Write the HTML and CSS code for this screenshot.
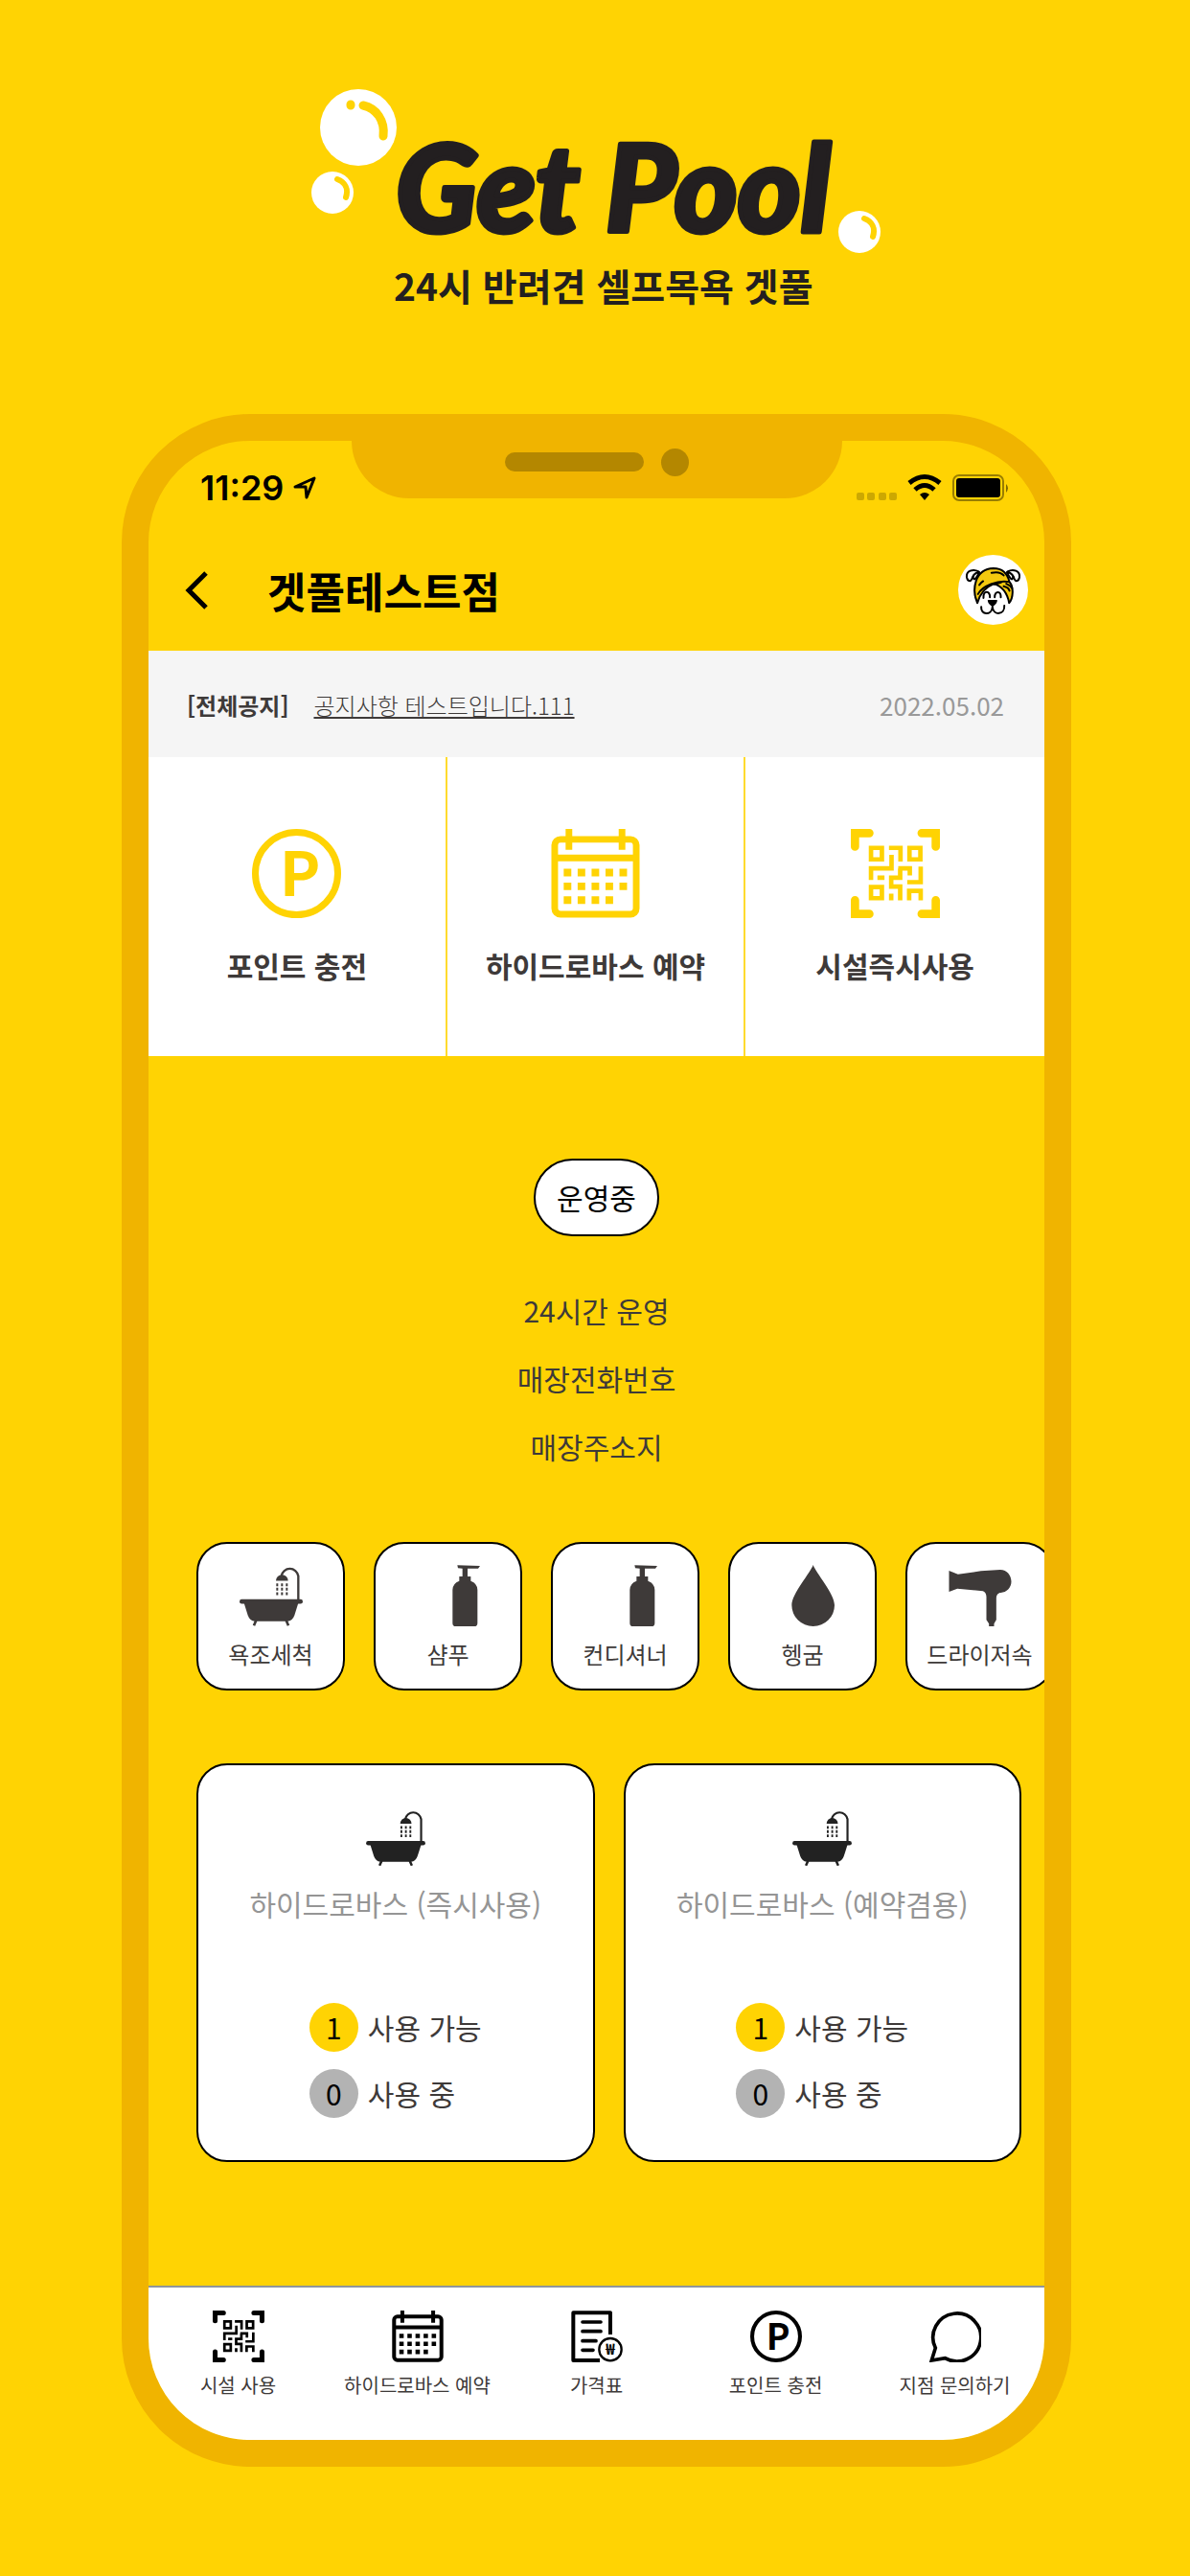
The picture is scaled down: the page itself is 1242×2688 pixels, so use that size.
FILE: index.html
```html
<!DOCTYPE html>
<html lang="ko">
<head>
    <meta charset="utf-8">
    <title>겟풀 - 24시 반려견 셀프목욕</title>
    <meta name="viewport" content="width=device-width, initial-scale=1.0">
    <link rel="stylesheet" href="styles.css">
</head>
<body>
    <!-- shared icons -->
    <svg class="icon-defs" aria-hidden="true">
        <symbol id="icon-point" viewBox="0 0 93 93">
            <circle cx="46.5" cy="46.5" r="43" fill="none" stroke="currentColor" stroke-width="7"/>
            <text class="point-letter" x="50" y="70" text-anchor="middle">P</text>
        </symbol>
        <symbol id="icon-calendar" viewBox="0 0 93 94">
            <g fill="none" stroke="currentColor" stroke-width="7">
                <rect x="3.5" y="11" width="86" height="79" rx="6"/>
                <path d="M18.500 0V22M74.500 0V22M3 30.500H90"/>
                <path stroke-width="8" stroke-dasharray="8 6.700" d="M13 46H80M13 60.500H80M13 75H66"/>
            </g>
        </symbol>
        <symbol id="icon-qr" viewBox="0 0 278 278">
            <g fill="none" stroke="currentColor">
                <path stroke-width="26" stroke-linecap="round" d="M13 55V13H58M265 55V13H221M13 222V265H58M265 222V265H221"/>
                <path stroke-width="14" d="M63 59h34v36H63zM183 59h34v36h-34zM63 181h34v35H63zM119 59H155V102M127 81V123H63V159M83 152h22M148 123H184V145M154 123V152H126V180H154V223M218 117V166H176M126 202v21M182 223V193H218V223"/>
            </g>
        </symbol>
        <symbol id="icon-bath" viewBox="0 0 198 189">
            <g fill="currentColor">
                <rect x="0" y="106" width="198" height="14" rx="7"/>
                <path d="M13 115L26 156Q32 174 48 175H150Q166 174 172 156L185 115Z"/>
                <path d="M114 48a19 19 0 0 1 38 0z"/>
            </g>
            <g fill="none" stroke="currentColor">
                <path stroke-width="7" d="M184 107V33A27 28 0 0 0 131 33"/>
                <path stroke-width="8" d="M52 172l-7 16M146 172l7 16"/>
                <path stroke-width="6" stroke-dasharray="9 5" d="M118 56V93M133 56V93M148 56V93"/>
            </g>
        </symbol>
        <symbol id="icon-bottle" viewBox="0 0 86 192" preserveAspectRatio="xMaxYMid">
            <path fill="currentColor" d="M15 1L86 3L80 11L47 11V36H57V50Q78 58 78 78V182Q78 192 68 192H10Q0 192 0 182V78Q0 58 21 50V36H31V11L17 10Z"/>
        </symbol>
        <symbol id="icon-drop" viewBox="0 0 134 192" preserveAspectRatio="xMaxYMid">
            <path fill="currentColor" d="M67 0C75 24 134 90 134 126A67 66 0 0 1 0 126C0 90 59 24 67 0Z"/>
        </symbol>
        <symbol id="icon-dryer" viewBox="0 0 195 192">
            <path fill="currentColor" d="M0 18L28 29L100 19L160 15C182 15 195 33 195 52C195 72 180 86 162 87C154 87 148 94 148 104V172L141 184V192H125V184L117 172V100C117 90 112 84 106 82L26 74L0 84Z"/>
        </symbol>
        <symbol id="icon-price" viewBox="0 0 162 162">
            <g fill="none" stroke="currentColor">
                <path stroke-width="12" stroke-linejoin="round" d="M123 75V7H7V156H90"/>
                <path stroke-width="11" stroke-linecap="round" d="M36 36H93M36 65H93M36 95H78M36 124H69"/>
                <circle cx="123" cy="122" r="35" stroke-width="7"/>
            </g>
            <text class="won-letter" x="123" y="139" text-anchor="middle">₩</text>
        </symbol>
        <symbol id="icon-chat" viewBox="0 0 162 162">
            <path fill="none" stroke="currentColor" stroke-width="11" d="M19 117L7 156L49 149A75 75 0 1 0 19 117Z"/>
        </symbol>
    </svg>

    <h1 class="logo">
        <svg class="logo-art" viewBox="325 90 595 240">
            <g fill="#fff">
                <circle cx="374" cy="133" r="40"/>
                <circle cx="347" cy="201" r="22"/>
                <circle cx="897" cy="242" r="22"/>
            </g>
            <g fill="none" stroke="#ffd303" stroke-linecap="round">
                <path stroke-width="9" d="M379 110C393 113 402 126 400 142M366 109v1"/>
                <path stroke-width="6" d="M352 187C360 190 364 197 361 206M902 228C910 231 914 238 911 247"/>
            </g>
            <text class="logo-name" x="413" y="242">Get Pool</text>
            <text class="logo-sub" x="411" y="314">24시 반려견 셀프목욕 겟풀</text>
        </svg>
    </h1>

    <main class="phone">
        <div class="notch">
            <span class="speaker"></span>
            <span class="camera"></span>
        </div>

        <div class="status-bar">
            <span class="time">11:29</span>
            <svg class="location" viewBox="0 0 24 24">
                <path fill="none" stroke="#000" stroke-width="3" stroke-linejoin="round" d="M2 11L22 2L14 22L13 11Z"/>
            </svg>
            <svg class="signal" viewBox="0 0 160 30">
                <g fill="#000" fill-opacity=".2">
                    <rect x="0" y="20" width="8" height="8" rx="2"/>
                    <rect x="11" y="20" width="8" height="8" rx="2"/>
                    <rect x="23" y="20" width="8" height="8" rx="2"/>
                    <rect x="34" y="20" width="8" height="8" rx="2"/>
                </g>
                <g fill="none" stroke="#000" stroke-width="5">
                    <path d="M55 10Q71 -3 87 10"/>
                    <path d="M61 17Q71 8 81 17"/>
                </g>
                <path d="M66 22Q71 18 76 22L71 28Z"/>
                <rect x="101" y="2" width="52" height="26" rx="6" fill="none" stroke="#000" stroke-opacity=".4" stroke-width="2"/>
                <rect x="104" y="5" width="46" height="20" rx="3"/>
                <path d="M156 11q4 4 0 9z" fill-opacity=".5"/>
            </svg>
        </div>

        <header class="app-header">
            <button class="back" aria-label="뒤로">
                <svg viewBox="0 0 24 40"><path fill="none" stroke="#000" stroke-width="5" d="M22 2L4 20L22 38"/></svg>
            </button>
            <h2>겟풀테스트점</h2>
            <button class="avatar" aria-label="내 정보">
                <svg viewBox="0 0 218 218">
                    <circle cx="109" cy="109" r="109" fill="#fff"/>
                    <g fill="#fff" stroke="#000" stroke-width="6" stroke-linecap="round" stroke-linejoin="round">
                        <path d="M64 52C46 42 24 50 27 70C30 84 40 84 43 74C45 64 52 58 64 52Z"/>
                        <path d="M66 54C52 56 44 66 48 74C52 80 58 70 66 54Z"/>
                        <path d="M154 52C172 42 194 50 191 70C188 84 178 84 175 74C173 64 166 58 154 52Z"/>
                        <path d="M152 54C166 56 174 66 170 74C166 80 160 70 152 54Z"/>
                        <path fill="#f4c90e" d="M60 150C42 110 50 44 110 42C140 42 154 60 160 84C174 100 172 134 159 150C154 122 142 100 112 90C86 100 68 120 60 150Z"/>
                        <path fill="none" d="M62 122C76 96 124 78 158 84M112 92L134 86M150 90Q164 96 168 104M142 98Q158 102 160 112M66 94Q72 86 78 82M104 56Q130 50 142 64"/>
                        <path fill="none" d="M79 134C78 110 100 110 99 132M114 132C114 110 134 112 133 132"/>
                        <path fill="none" d="M72 162C70 188 104 190 107 162C110 190 146 188 144 158"/>
                        <path fill="#000" stroke-width="4" d="M94 142H120Q120 150 107 160Q94 150 94 142Z"/>
                    </g>
                </svg>
            </button>
        </header>

        <section class="notice">
            <strong>[전체공지]</strong>
            <a href="#">공지사항 테스트입니다.111</a>
            <time datetime="2022-05-02">2022.05.02</time>
        </section>

        <section class="menu">
            <a href="#"><svg><use href="#icon-point"/></svg>포인트 충전</a>
            <a href="#"><svg><use href="#icon-calendar"/></svg>하이드로바스 예약</a>
            <a href="#"><svg><use href="#icon-qr"/></svg>시설즉시사용</a>
        </section>

        <section class="store">
            <span class="open-state">운영중</span>
            <p>24시간 운영</p>
            <p>매장전화번호</p>
            <p>매장주소지</p>
        </section>

        <ul class="facilities">
            <li><svg><use href="#icon-bath"/></svg>욕조세척</li>
            <li><svg><use href="#icon-bottle"/></svg>샴푸</li>
            <li><svg><use href="#icon-bottle"/></svg>컨디셔너</li>
            <li><svg><use href="#icon-drop"/></svg>헹굼</li>
            <li><svg><use href="#icon-dryer"/></svg>드라이저속</li>
        </ul>

        <section class="rooms">
            <article class="room">
                <svg><use href="#icon-bath"/></svg>
                <h3>하이드로바스 (즉시사용)</h3>
                <div class="counts">
                    <p><span class="count free">1</span>사용 가능</p>
                    <p><span class="count busy">0</span>사용 중</p>
                </div>
            </article>
            <article class="room">
                <svg><use href="#icon-bath"/></svg>
                <h3>하이드로바스 (예약겸용)</h3>
                <div class="counts">
                    <p><span class="count free">1</span>사용 가능</p>
                    <p><span class="count busy">0</span>사용 중</p>
                </div>
            </article>
        </section>

        <nav class="tab-bar">
            <a href="#"><svg><use href="#icon-qr"/></svg>시설 사용</a>
            <a href="#"><svg><use href="#icon-calendar"/></svg>하이드로바스 예약</a>
            <a href="#"><svg><use href="#icon-price"/></svg>가격표</a>
            <a href="#"><svg><use href="#icon-point"/></svg>포인트 충전</a>
            <a href="#"><svg><use href="#icon-chat"/></svg>지점 문의하기</a>
        </nav>
    </main>
</body>
</html>
```
FILE: styles.css
```css
* {
    margin: 0;
    padding: 0;
    box-sizing: border-box;
}

body {
    padding: 90px 124px 114px 127px;
    background: #ffd303;
    color: #3e3a39;
    font-family: "Noto Sans CJK KR", "Noto Sans", sans-serif;
}

a {
    color: inherit;
    text-decoration: none;
}

button {
    border: 0;
    background: none;
    cursor: pointer;
}

svg {
    display: block;
}

.icon-defs {
    display: none;
}

.point-letter {
    fill: currentColor;
    font-size: 64px;
    font-weight: 700;
}

.won-letter {
    fill: currentColor;
    font-size: 48px;
    font-weight: 700;
}

/* logo */
.logo {
    display: flex;
    justify-content: center;
    margin-bottom: 102px;
}

.logo-art {
    width: 595px;
    max-width: 100%;
}

.logo-name {
    font-family: Lato, sans-serif;
    font-size: 126px;
    font-weight: 900;
    font-style: italic;
    fill: #231f20;
    stroke: #231f20;
    stroke-width: 5px;
    stroke-linejoin: round;
}

.logo-sub {
    font-size: 39px;
    font-weight: 700;
    fill: #231f20;
}

/* phone */
.phone {
    position: relative;
    overflow: hidden;
    border: 28px solid #f0b400;
    border-radius: 134px;
}

.notch {
    position: absolute;
    top: 0;
    left: 50%;
    display: flex;
    align-items: center;
    justify-content: center;
    gap: 18px;
    width: 512px;
    height: 60px;
    padding-bottom: 16px;
    transform: translateX(-50%);
    border-radius: 0 0 60px 60px;
    background: #f0b400;
}

.speaker {
    width: 145px;
    height: 20px;
    border-radius: 10px;
    background: #b48700;
}

.camera {
    width: 29px;
    height: 29px;
    border-radius: 50%;
    background: #b48700;
}

.status-bar {
    display: flex;
    align-items: center;
    padding: 30px 36px 26px 54px;
    color: #000;
}

.time {
    font-family: Inter, sans-serif;
    font-size: 36px;
    font-weight: 600;
    line-height: 38px;
}

.location {
    width: 24px;
    margin-left: 10px;
}

.signal {
    width: 160px;
    margin-left: auto;
}

.app-header {
    display: flex;
    align-items: center;
    padding: 25px 17px 27px 38px;
    color: #000;
}

.app-header h2 {
    flex: 1;
    margin-left: 62px;
    font-size: 44px;
    font-weight: 700;
    line-height: 60px;
}

.back svg {
    width: 24px;
    height: 40px;
}

.avatar svg {
    width: 73px;
    height: 73px;
}

.notice {
    display: flex;
    align-items: center;
    gap: 26px;
    padding: 39px 42px 36px 40px;
    background: #f5f5f5;
    font-size: 24px;
    line-height: 36px;
}

.notice a {
    font-weight: 300;
    text-decoration: underline;
}

.notice time {
    margin-left: auto;
    color: #999;
    font-size: 26px;
}

.menu {
    display: grid;
    grid-template-columns: repeat(3, 1fr);
    background: #fff;
}

.menu a {
    display: flex;
    flex-direction: column;
    align-items: center;
    gap: 27px;
    padding: 75px 0 73px;
    border-right: 2px solid #ffdb2e;
    font-size: 30px;
    font-weight: 700;
    line-height: 44px;
}

.menu a:last-child {
    border-right: 0;
}

.menu svg {
    width: 93px;
    height: 93px;
    color: #ffd303;
}

/* store info */
.store {
    display: flex;
    flex-direction: column;
    align-items: center;
    padding: 107px 0 64px;
    font-size: 30px;
    line-height: 71px;
}

.open-state {
    margin-bottom: 42px;
    padding: 18px 22px;
    border: 2px solid #000;
    border-radius: 41px;
    background: #fff;
    color: #000;
    line-height: 41px;
}

.facilities {
    display: flex;
    gap: 30px;
    margin-bottom: 76px;
    padding-left: 50px;
    overflow: hidden;
    list-style: none;
}

.facilities li {
    display: flex;
    flex: 0 0 155px;
    flex-direction: column;
    align-items: center;
    gap: 11px;
    padding: 22px 0 18px;
    border: 2px solid #000;
    border-radius: 32px;
    background: #fff;
    font-size: 24px;
    line-height: 36px;
}

.facilities svg {
    width: 66px;
    height: 64px;
}

.rooms {
    display: grid;
    grid-template-columns: 1fr 1fr;
    gap: 30px;
    margin-bottom: 129px;
    padding: 0 24px 0 50px;
}

.room {
    display: flex;
    flex-direction: column;
    align-items: center;
    padding: 46px 0 44px;
    border: 2px solid #000;
    border-radius: 32px;
    background: #fff;
}

.room svg {
    width: 62px;
    height: 59px;
    color: #222;
}

.room h3 {
    margin: 17px 0 82px;
    color: #959595;
    font-size: 30px;
    font-weight: 400;
    line-height: 44px;
}

.counts {
    display: flex;
    flex-direction: column;
    gap: 18px;
}

.counts p {
    display: flex;
    align-items: center;
    gap: 10px;
    font-size: 30px;
    line-height: 51px;
}

.count {
    width: 51px;
    border-radius: 50%;
    color: #000;
    text-align: center;
}

.free {
    background: #ffd303;
}

.busy {
    background: #b3b3b3;
}

.tab-bar {
    display: grid;
    grid-template-columns: repeat(5, 1fr);
    border-top: 2px solid #8f959c;
    background: #fff;
}

.tab-bar a {
    display: flex;
    flex-direction: column;
    align-items: center;
    gap: 9px;
    padding: 24px 0 42px;
    font-size: 20px;
    line-height: 30px;
}

.tab-bar svg {
    width: 54px;
    height: 54px;
    color: #000;
}
```
